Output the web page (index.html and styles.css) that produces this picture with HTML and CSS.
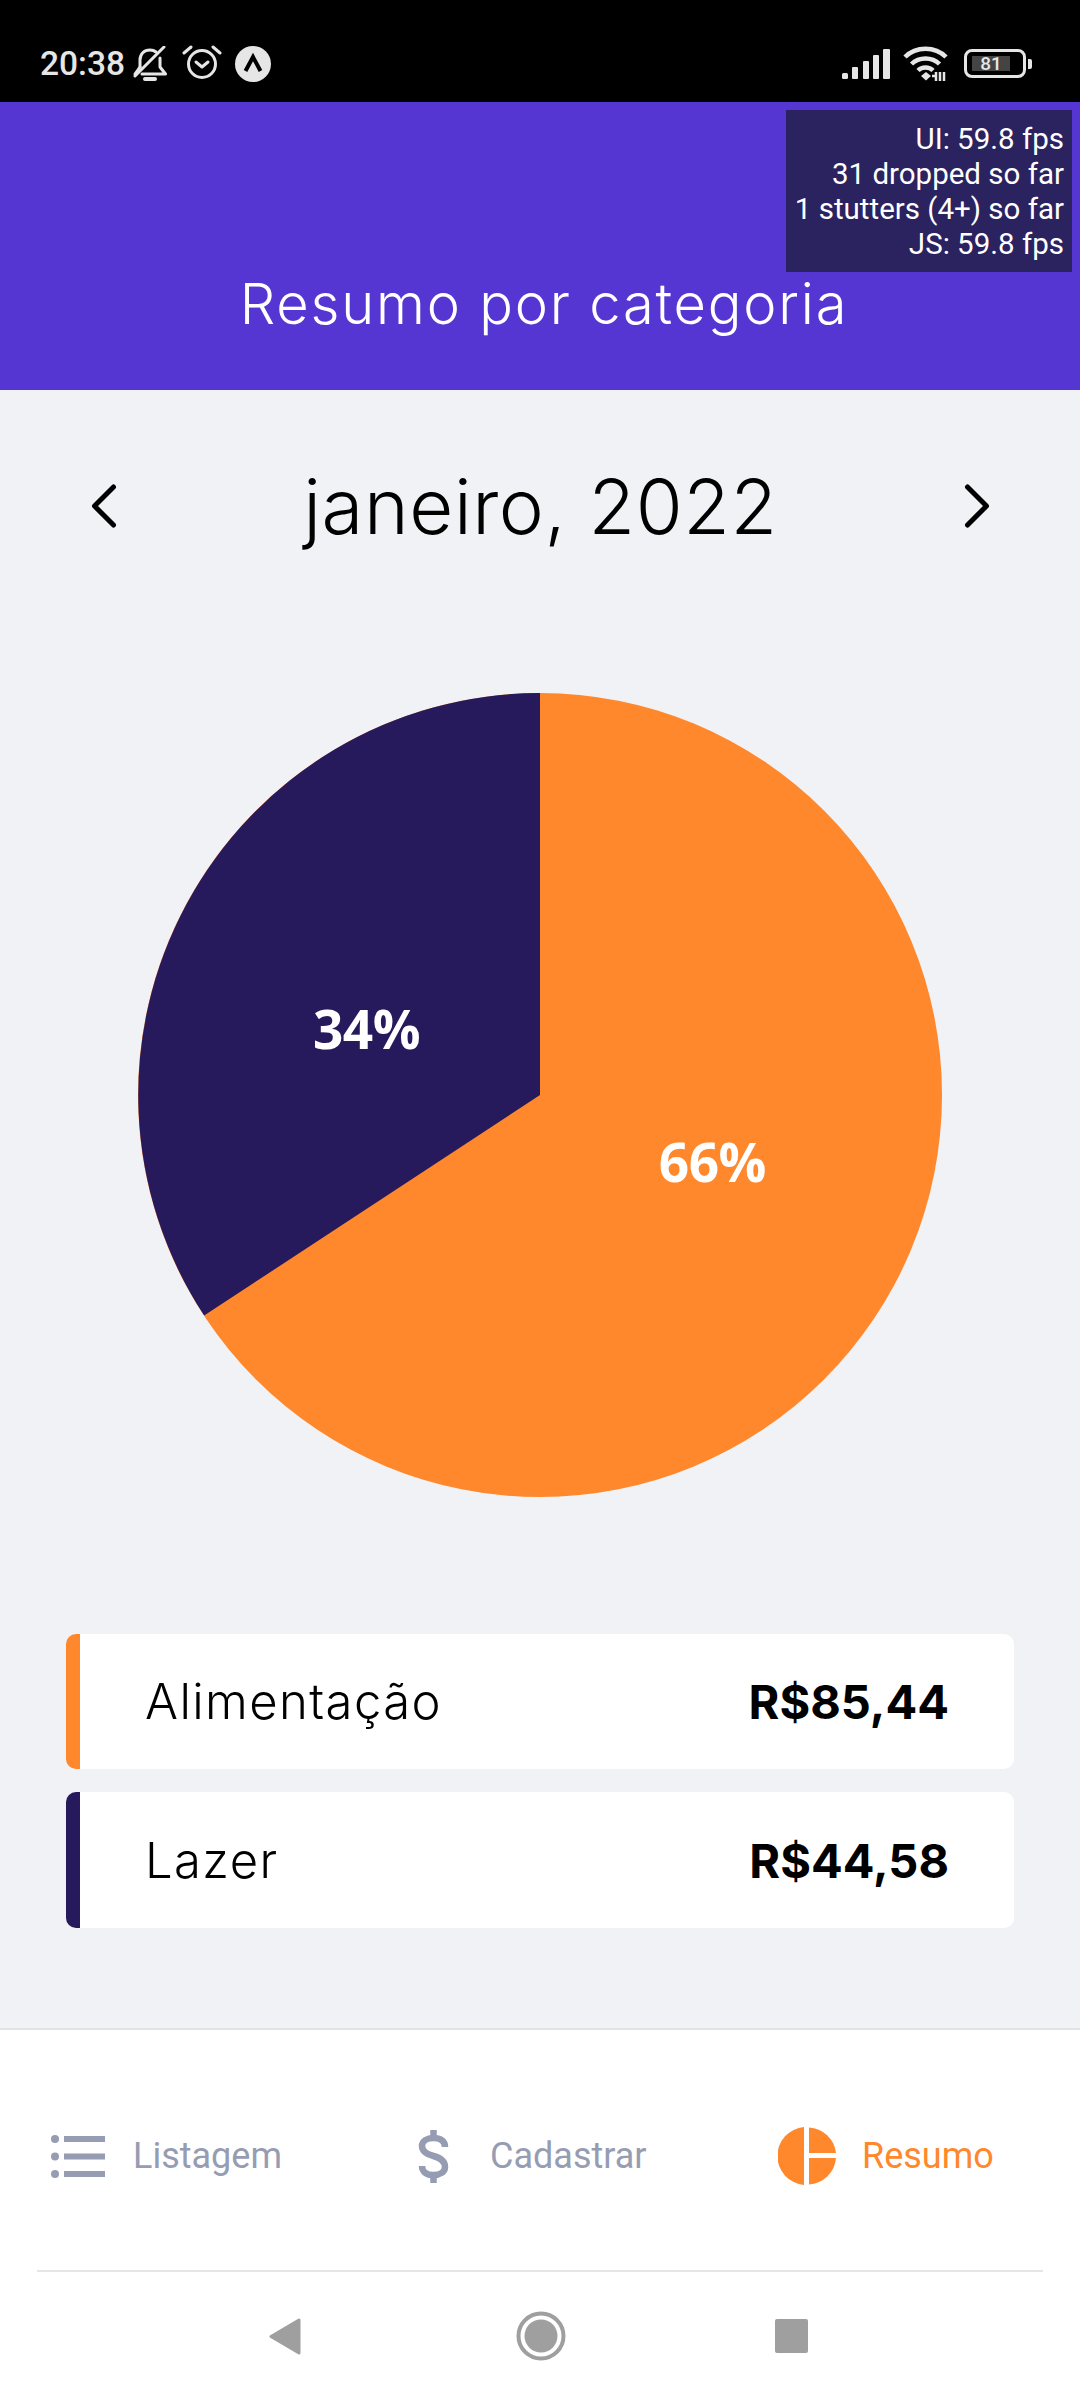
FILE: index.html
```html
<!DOCTYPE html>
<html lang="pt-BR">
<head>
    <meta charset="utf-8">
    <title>Resumo por categoria</title>
    <link rel="stylesheet" href="styles.css">
</head>
<body>
    <div class="status-bar">
        <span class="status-time">20:38</span>
        <svg class="icon-bell" viewBox="0 0 34 36" fill="none" stroke="#e6e6e6" stroke-width="3" stroke-linecap="round" stroke-linejoin="round">
            <path d="M7 21V14C7 8 11 4 17 4C19.500 4 21.500 4.700 23 6"/>
            <path d="M27 12V21L32.500 28H9"/>
            <path d="M7 21L2 28"/>
            <path d="M2 30L31 1"/>
            <path d="M12 33H22" stroke-width="4"/>
        </svg>
        <svg class="icon-alarm" viewBox="0 0 40 34" fill="none" stroke="#e6e6e6" stroke-width="3" stroke-linecap="round" stroke-linejoin="round">
            <circle cx="20" cy="19" r="13.500"/>
            <path d="M14 17L20 22L26 17"/>
            <path d="M2 8L9 2"/>
            <path d="M38 8L31 2"/>
        </svg>
        <svg class="icon-expo" viewBox="0 0 36 36">
            <circle cx="18" cy="18" r="18" fill="#e6e6e6"/>
            <path d="M10.500 25L18 11L25.500 25" fill="none" stroke="#000" stroke-width="4"/>
        </svg>
        <div class="status-right">
            <svg class="icon-signal" viewBox="0 0 48 30" fill="#e6e6e6">
                <rect x="0" y="24" width="6" height="6" rx="1.500"/>
                <rect x="10" y="18" width="6" height="12" rx="1"/>
                <rect x="21" y="12" width="6" height="18" rx="1"/>
                <rect x="31" y="6" width="6" height="24" rx="1"/>
                <rect x="41" y="0" width="7" height="30" rx="1"/>
            </svg>
            <svg class="icon-wifi" viewBox="0 0 45 35" fill="none" stroke="#e6e6e6" stroke-width="4.500">
                <path d="M2 11C13 0 32 0 43 11"/>
                <path d="M8.500 18C16 10.500 29 10.500 36.500 18"/>
                <path d="M15 24.500C19 20.500 26 20.500 30 24.500"/>
                <path d="M18 30L23 26L28 30L23 34.500Z" fill="#e6e6e6" stroke="none"/>
                <path d="M33 26V35M32 30H29M41 26V35M37 26V35" stroke-width="2.500"/>
            </svg>
            <div class="battery">
                <div class="battery-body">
                    <span class="battery-fill">81</span>
                </div>
                <div class="battery-nub"></div>
            </div>
        </div>
    </div>

    <div class="header">
        <h1 class="header-title">Resumo por categoria</h1>
        <div class="perf-monitor">
            <div>UI: 59.8 fps</div>
            <div>31 dropped so far</div>
            <div>1 stutters (4+) so far</div>
            <div>JS: 59.8 fps</div>
        </div>
    </div>

    <div class="content">
        <div class="month-row">
            <svg class="chevron" viewBox="0 0 26 44" fill="none" stroke="#000" stroke-width="5" stroke-linecap="round" stroke-linejoin="round">
                <path d="M22.500 3L3.500 22L22.500 41"/>
            </svg>
            <span class="month-label">janeiro, 2022</span>
            <svg class="chevron" viewBox="0 0 26 44" fill="none" stroke="#000" stroke-width="5" stroke-linecap="round" stroke-linejoin="round">
                <path d="M3.500 3L22.500 22L3.500 41"/>
            </svg>
        </div>

        <svg class="pie" viewBox="0 0 802 802">
            <circle cx="401" cy="401" r="401" fill="#ff872c"/>
            <path d="M401 401L66 621A401 401 0 0 1 401 0Z" fill="#26195c"/>
            <text class="pie-label" x="228" y="355">34%</text>
            <text class="pie-label" x="573" y="488">66%</text>
        </svg>

        <div class="cards">
            <div class="card card-food">
                <span class="card-name">Alimentação</span>
                <span class="card-amount">R$85,44</span>
            </div>
            <div class="card card-leisure">
                <span class="card-name">Lazer</span>
                <span class="card-amount">R$44,58</span>
            </div>
        </div>
    </div>

    <div class="bottom">
        <div class="tabs">
            <div class="tab">
                <svg class="tab-icon-list" viewBox="0 0 54 43" fill="#969cb2">
                    <circle cx="4" cy="4" r="4"/>
                    <circle cx="4" cy="21.500" r="4"/>
                    <circle cx="4" cy="39" r="4"/>
                    <rect x="13" y="1" width="41" height="6"/>
                    <rect x="13" y="18.500" width="41" height="6"/>
                    <rect x="13" y="36" width="41" height="6"/>
                </svg>
                <span class="tab-label">Listagem</span>
            </div>
            <div class="tab">
                <svg class="tab-icon-dollar" viewBox="0 0 31 53" fill="none" stroke="#969cb2" stroke-width="6.500">
                    <path d="M15.500 0V9M15.500 44V53"/>
                    <path d="M27 17C27 11 22 8 15.500 8C9 8 4 11 4 16C4 21 8 24 15.500 26C23 28 27 31 27 37C27 42 22 45 15.500 45C9 45 4 42 4 36"/>
                </svg>
                <span class="tab-label">Cadastrar</span>
            </div>
            <div class="tab tab-active">
                <svg class="tab-icon-pie" viewBox="0 0 58 58" fill="#ff872c">
                    <path d="M26 0.100A29 29 0 0 0 26 57.900Z"/>
                    <path d="M31 0.400A29 29 0 0 1 58 26H31Z"/>
                    <path d="M31 31H58A29 29 0 0 1 31 57.600Z"/>
                </svg>
                <span class="tab-label">Resumo</span>
            </div>
        </div>
        <div class="nav-bar">
            <svg class="nav-back" viewBox="0 0 32 37" fill="#9f9f9f" stroke="#9f9f9f" stroke-width="3" stroke-linejoin="round">
                <path d="M30 2V35L2 18.500Z"/>
            </svg>
            <svg class="nav-home" viewBox="0 0 50 50">
                <circle cx="25" cy="25" r="22.500" fill="none" stroke="#9f9f9f" stroke-width="4"/>
                <circle cx="25" cy="25" r="16.500" fill="#9f9f9f"/>
            </svg>
            <div class="nav-square"></div>
        </div>
    </div>
</body>
</html>
```

FILE: styles.css
```css
* {
    box-sizing: border-box;
}

html, body {
    margin: 0;
    padding: 0;
}

body {
    width: 1080px;
    height: 2400px;
    overflow: hidden;
    display: flex;
    flex-direction: column;
    background-color: #f0f2f5;
    font-family: 'Inter', 'Roboto', sans-serif;
    color: #000;
}

/* barra do sistema */
.status-bar {
    height: 102px;
    flex-shrink: 0;
    display: flex;
    align-items: center;
    padding: 25px 48px 0 40px;
    background-color: #000;
    color: #e6e6e6;
}

.status-time {
    font-family: 'Roboto', sans-serif;
    font-size: 33.5px;
    font-weight: 500;
    width: 93px;
}

.icon-bell {
    width: 34px;
    height: 36px;
    margin-right: 15px;
}

.icon-alarm {
    width: 40px;
    height: 34px;
    margin-right: 13px;
    margin-top: -3px;
}

.icon-expo {
    width: 36px;
    height: 36px;
}

.status-right {
    margin-left: auto;
    display: flex;
    align-items: center;
}

.icon-signal {
    width: 48px;
    height: 30px;
    margin-right: 13px;
}

.icon-wifi {
    width: 45px;
    height: 35px;
    margin-right: 16px;
}

.battery {
    display: flex;
    align-items: center;
    gap: 2px;
}

.battery-body {
    width: 62px;
    height: 29px;
    border: 3px solid #e6e6e6;
    border-radius: 8px;
    padding: 4px 5px;
}

.battery-fill {
    display: block;
    width: 38px;
    height: 15px;
    background-color: #444;
    font-family: 'Roboto', sans-serif;
    font-size: 19px;
    font-weight: 500;
    line-height: 15px;
    text-align: center;
    color: #e6e6e6;
}

.battery-nub {
    width: 4px;
    height: 10px;
    background-color: #e6e6e6;
    border-radius: 0 2px 2px 0;
}

/* cabecalho */
.header {
    position: relative;
    height: 288px;
    flex-shrink: 0;
    display: flex;
    align-items: flex-end;
    justify-content: center;
    padding: 0 0 51px 8px;
    background-color: #5636d3;
}

.header-title {
    margin: 0;
    font-size: 56px;
    font-weight: 300;
    line-height: 70px;
    letter-spacing: 1.8px;
    color: #fff;
}

.perf-monitor {
    position: absolute;
    top: 8px;
    right: 8px;
    width: 286px;
    height: 162px;
    padding: 12px 8px 0 0;
    background-color: #2b2260;
    font-family: 'Roboto', sans-serif;
    font-size: 29.5px;
    line-height: 35px;
    text-align: right;
    color: #fff;
}

/* conteudo */
.month-row {
    display: flex;
    align-items: center;
    justify-content: space-between;
    height: 124px;
    margin-top: 54px;
    padding: 0 90px 0 91px;
}

.chevron {
    width: 26px;
    height: 44px;
}

.month-label {
    font-size: 76px;
    font-weight: 300;
    line-height: 124px;
    letter-spacing: 0.6px;
}

.pie {
    display: block;
    width: 804px;
    height: 804px;
    margin: 125px auto 0;
}

.pie-label {
    font-family: 'Open Sans', sans-serif;
    font-size: 53px;
    font-weight: 700;
    letter-spacing: -0.5px;
    text-anchor: middle;
    fill: #fff;
}

.cards {
    display: flex;
    flex-direction: column;
    gap: 23px;
    margin: 137px 66px 0;
}

.card {
    display: flex;
    align-items: center;
    justify-content: space-between;
    height: 135px;
    padding: 0 65px;
    border-left: 14px solid;
    border-radius: 10px;
    background-color: #fff;
}

.card-food {
    border-left-color: #ff872c;
}

.card-leisure {
    height: 136px;
    border-left-color: #26195c;
}

.card-name {
    font-size: 49px;
    font-weight: 300;
    letter-spacing: 1.4px;
}

.card-amount {
    font-size: 47px;
    font-weight: 700;
}

/* abas e navegacao */
.bottom {
    margin-top: auto;
    height: 372px;
    flex-shrink: 0;
    display: flex;
    flex-direction: column;
    border-top: 2px solid #e3e3e6;
    background-color: #fff;
}

.tabs {
    position: relative;
    height: 242px;
    display: grid;
    grid-template-columns: 367px 360px 1fr;
    align-items: center;
    padding: 10px 0 0 51px;
}

.tabs::after {
    content: "";
    position: absolute;
    left: 37px;
    right: 37px;
    bottom: 0;
    height: 2px;
    background-color: #e6e6e6;
}

.tab {
    display: flex;
    align-items: center;
    font-family: 'Roboto', sans-serif;
    font-size: 36px;
    color: #969cb2;
}

.tab-active {
    color: #ff872c;
}

.tab-icon-list {
    width: 54px;
    height: 43px;
    margin-right: 28px;
}

.tab-icon-dollar {
    width: 31px;
    height: 53px;
    margin-right: 41px;
}

.tab-icon-pie {
    width: 58px;
    height: 58px;
    margin-right: 26px;
}

.nav-bar {
    flex: 1;
    display: grid;
    grid-template-columns: 247px 259px 1fr;
    align-items: center;
    padding-left: 269px;
}

.nav-back {
    width: 32px;
    height: 37px;
}

.nav-home {
    width: 50px;
    height: 50px;
}

.nav-square {
    width: 33px;
    height: 34px;
    border-radius: 2px;
    background-color: #9f9f9f;
}
```
